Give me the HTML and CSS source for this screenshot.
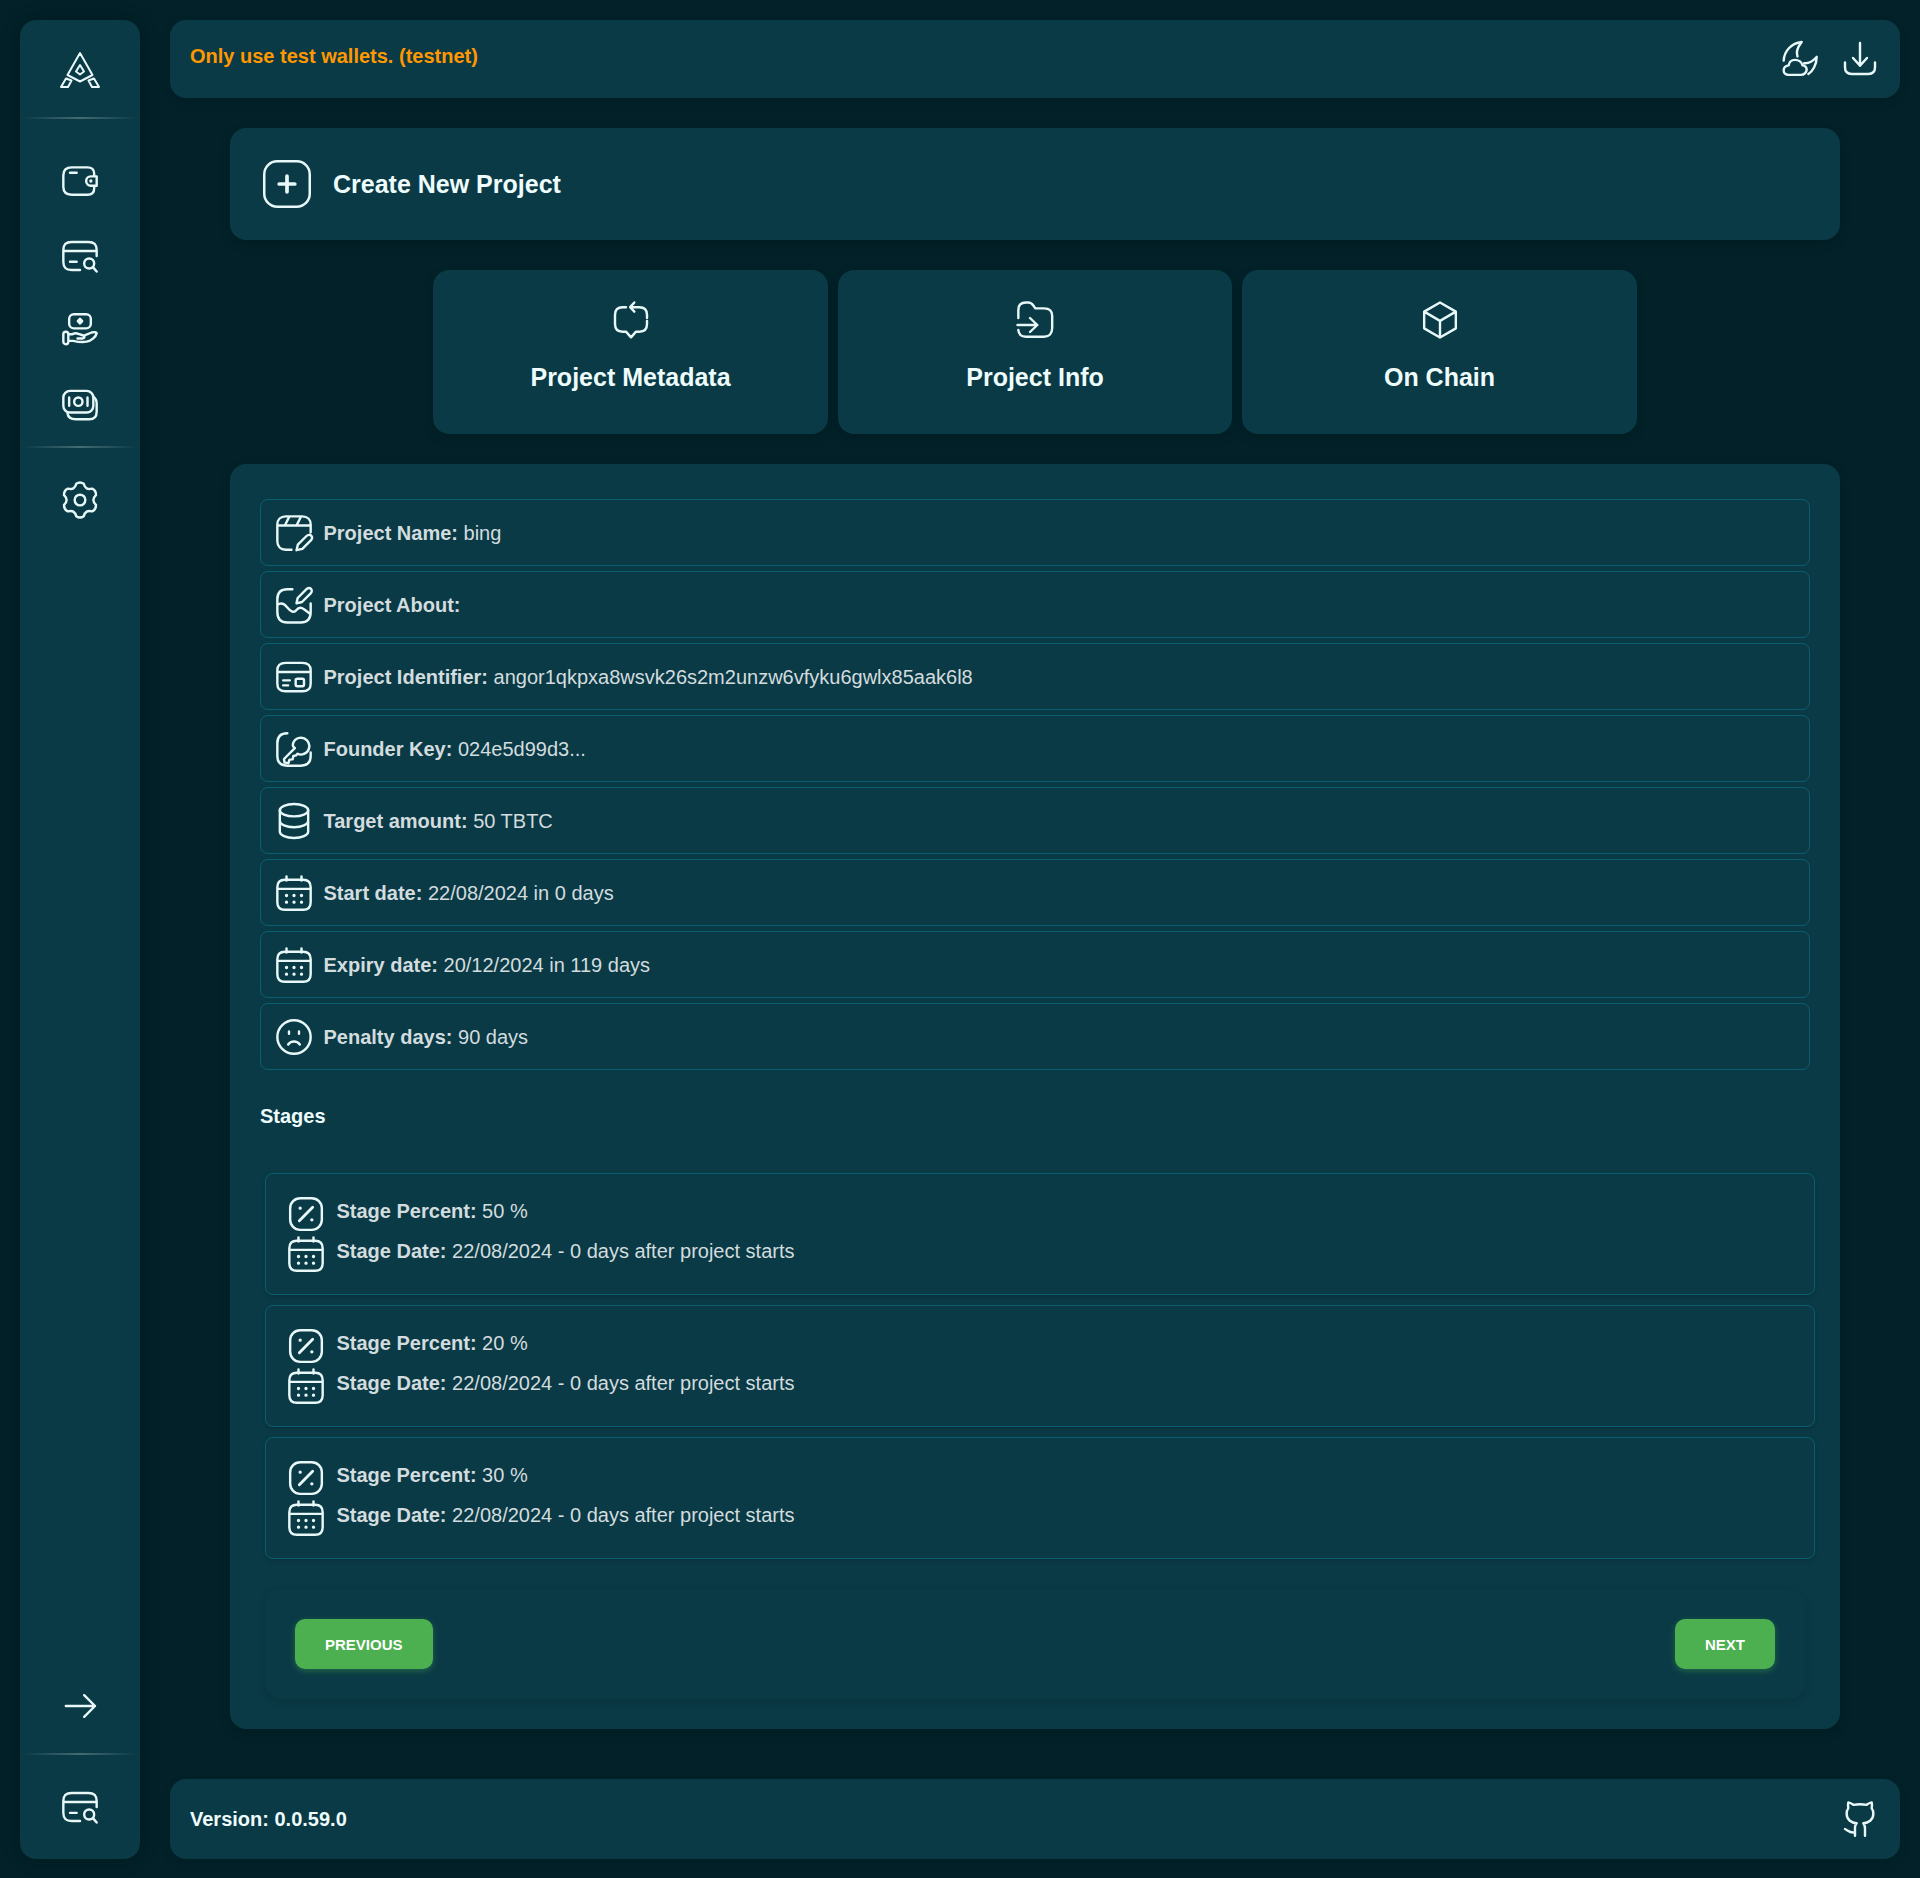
FILE: index.html
```html
<!DOCTYPE html>
<html lang="en">
<head>
<meta charset="utf-8">
<title>Create New Project</title>
<link rel="stylesheet" href="styles.css">
</head>
<body>
<svg class="defs" width="0" height="0" aria-hidden="true">
  <defs>
    <symbol id="i-calendar" viewBox="0 0 24 24"><path d="M7.500 2v2.500M16.500 2v2.500M6.500 4h11c3 0 4.500 1.500 4.500 4.500v9c0 3-1.500 4.500-4.500 4.500h-11c-3 0-4.500-1.500-4.500-4.500v-9C2 5.500 3.500 4 6.500 4ZM2 9.500h20"/><path class="dot" d="M7.500 13.500h.01M12 13.500h.01M16.500 13.500h.01M7.500 17.500h.01M12 17.500h.01M16.500 17.500h.01"/></symbol>
    <symbol id="i-percent" viewBox="0 0 24 24"><rect x="2.500" y="2.500" width="19" height="19" rx="6"/><path class="heavy" d="M8 16l8-8"/><path class="dot" d="M8.500 8.500h.01M15.500 15.500h.01"/></symbol>
    <symbol id="i-cardsearch" viewBox="0 0 24 24"><path d="M12 20.400H7c-3.500 0-5-1.400-5-4.900V8.500C2 5 3.500 3.600 7 3.600h10c3.500 0 5 1.400 5 4.900V12M2 9h20M6 15.500h4"/><circle cx="17.500" cy="16.500" r="3"/><path d="M20 19l2 2.300"/></symbol>
  </defs>
</svg>
<div class="app">
  <aside class="sidebar">
    <div class="logo">
      <svg class="logo-mark" viewBox="58 50 44 40"><path d="M80 53l12.500 22L80 81.500 67.500 75ZM80 65l4 6.500-4 3-4-3ZM66 78.500l5.500 2L68 87h-7ZM94 78.500l-5.500 2L92 87h7Z"/></svg>
    </div>
    <div class="rule"></div>
    <nav class="side-nav">
      <a class="side-item"><svg class="ic"  viewBox="0 0 24 24"><path d="M20.500 9V7.500c0-2.500-1.500-3.700-4-3.700H7C3.800 3.800 2 5.500 2 8.500v7c0 3 1.800 4.700 5 4.700h9.500c2.500 0 4-1.200 4-3.700V15M6 7h4M22 9.200h-3.500a2.800 2.800 0 0 0 0 5.600H22Z"/><path class="dot" d="M18.500 12h.01"/></svg></a>
      <a class="side-item"><svg class="ic"><use href="#i-cardsearch"/></svg></a>
      <a class="side-item"><svg class="ic" viewBox="0 0 24 24"><rect x="5.500" y="2.500" width="13" height="8.500" rx="2.800"/><path class="dot" d="M12 6.700h.01"/><path d="M12 5.300l1.300 1.400L12 8.100l-1.300-1.400ZM5.500 14.500h2c1-.5 2-.8 3.500-.2l3 1c1 .3 1 1.800-.5 1.800h-3M14 15.500l5-2c1.500-.5 3 0 3 .5-.5 2-3 4.500-6 5-3 .6-6 0-8-.5H5.500"/><rect x="2" y="13" width="3" height="7.500" rx="1.500"/></svg></a>
      <a class="side-item"><svg class="ic" viewBox="0 0 24 24"><rect x="2" y="3.500" width="18" height="13" rx="4"/><circle cx="11" cy="10" r="2.500"/><path d="M5.500 7.500v5M16.500 7.500v5M4.500 17c.3 2.300 2 3.500 5 3.500h8c3 0 4.500-1.500 4.500-4.500v-5c0-2-.8-3.200-2-4"/></svg></a>
    </nav>
    <div class="rule"></div>
    <nav class="side-nav side-nav-gap">
      <a class="side-item"><svg class="ic" viewBox="0 0 24 24"><path d="M9.750 2.260A4 4 0 0 1 14.250 2.260Q15.250 6.370 19.310 5.180A4 4 0 0 1 21.560 9.080Q18.500 12 21.560 14.920A4 4 0 0 1 19.310 18.820Q15.250 17.630 14.250 21.740A4 4 0 0 1 9.750 21.740Q8.750 17.630 4.690 18.820A4 4 0 0 1 2.440 14.920Q5.500 12 2.440 9.080A4 4 0 0 1 4.690 5.180Q8.750 6.370 9.750 2.260Z"/><circle cx="12" cy="12" r="3.200"/></svg></a>
    </nav>
    <div class="side-bottom">
      <a class="side-item"><svg class="ic" viewBox="0 0 24 24"><path d="M3.500 12h17.500M14.500 5.500L21 12l-6.500 6.500"/></svg></a>
      <div class="rule"></div>
      <a class="side-item"><svg class="ic"><use href="#i-cardsearch"/></svg></a>
    </div>
  </aside>

  <div class="column">
    <header class="bar">
      <strong class="warning">Only use test wallets. (testnet)</strong>
      <div class="bar-icons">
        <svg class="ic" viewBox="0 0 24 24"><path d="M13 1.800C7 2.500 2.500 7 2.200 13M13 1.800c-2.500 3.200-3.500 6.200-2.500 8.700M22 10.800c-2.500 2.700-5 4-7.500 3.700M22 10.800c0 4.700-2.500 8.700-5 10.200M5 21.500h7.500c2 0 3.500-1.500 3.500-3s-1-2.500-2.500-2.700C13 13.700 11 12.500 9 12.500s-3.500 1.200-3.800 3.300c-1.700.2-3 1.400-3 3s1.300 2.700 2.800 2.700Z"/></svg>
        <svg class="ic" viewBox="0 0 24 24"><path d="M12 2.400V16M7.800 11.400L12 16l4.200-4.600M3 14v3c0 2.800 1.500 4 4 4h10c2.500 0 4-1.200 4-4v-3"/></svg>
      </div>
    </header>

    <main class="content">
      <section class="card title-card">
        <svg class="ic ic-title" viewBox="0 0 24 24"><rect x="1.500" y="1.500" width="21" height="21" rx="6"/><path class="heavy" d="M12 8.400v7.200M8.400 12h7.200"/></svg>
        <h1 class="page-title">Create New Project</h1>
      </section>

      <section class="tabs">
        <a class="card tab">
          <svg class="ic" viewBox="0 0 24 24"><path d="M11.500 4.300H17c3 0 4.600 1.600 4.600 4.600v1.900M21.600 12.500v1.900c0 3-1.600 4.600-4.600 4.600h-2l-3 3.400-3-3.400H7c-3 0-4.600-1.600-4.600-4.600V8.900c0-3 1.600-4.600 4.600-4.600h2M14 1.500l-2.500 2.800L14 7"/></svg>
          <span class="tab-label">Project Metadata</span>
        </a>
        <a class="card tab">
          <svg class="ic" viewBox="0 0 24 24"><path d="M2 10.800V6c0-3 1.500-4.500 4.500-4.500H8c1.500 0 2.300.8 3 1.800l1.200 1.700h5.300c3 0 4.800 1.500 4.800 4.500V17c0 3-1.800 5-4.800 5h-11c-2.800 0-4.300-1.500-4.500-4M1.500 15h11.900M9 10.800l4.400 4.200L9 19.200"/></svg>
          <span class="tab-label">Project Info</span>
        </a>
        <a class="card tab">
          <svg class="ic" viewBox="0 0 24 24"><path d="M12 1.500l9.500 5.500v10L12 22.500 2.500 17V7ZM2.500 7L12 12.500 21.500 7M12 12.500v10"/></svg>
          <span class="tab-label">On Chain</span>
        </a>
      </section>

      <section class="card details">
        <div class="row"><svg class="ic" viewBox="0 0 24 24"><path d="M10.500 22H7c-3 0-5-2-5-5V7c0-3 2-5 5-5h10c3 0 5 2 5 5v4.500M2 7.500h20M9 2.500L6.500 7.500M16 2.500l-2.500 5M13.500 22.300l.8-3.300 5.200-5.200c.9-.9 2.100-.9 2.800-.2.7.7.6 1.900-.2 2.800L17 21.500Z"/></svg><p class="line"><b>Project Name:</b> bing</p></div>
        <div class="row"><svg class="ic" viewBox="0 0 24 24"><path d="M11 2.500H8C4 2.500 2 4.500 2 8.500V16c0 4 2 6.500 6 6.500h8c4 0 6-2.500 6-6.500v-5M2 12c2-1.500 4-1 6 1.500s4 3.500 5.500 1.500 3-1.500 4.500-.5l4 3M13.500 11l.7-3.200 5.300-5.300c.8-.8 2-.9 2.700-.2.700.7.6 1.900-.2 2.700l-5.200 5.200Z"/></svg><p class="line"><b>Project About:</b></p></div>
        <div class="row"><svg class="ic" viewBox="0 0 24 24"><path d="M7 3.500h10c3.500 0 5 1.400 5 4.500v8c0 3.100-1.500 4.500-5 4.500H7c-3.500 0-5-1.400-5-4.500V8c0-3.100 1.500-4.500 5-4.500ZM2 9h20M5.500 14h4M5.500 17h3"/><rect x="13" y="13" width="5" height="4.500" rx="1"/></svg><p class="line"><b>Project Identifier:</b> angor1qkpxa8wsvk26s2m2unzw6vfyku6gwlx85aak6l8</p></div>
        <div class="row"><svg class="ic" viewBox="0 0 24 24"><path d="M8 2.500C4 2.500 2 4.500 2 8.500v7.500c0 4 2 6 6 6h8c4 0 6-2 6-6v-2M12.500 11.500L6 18l.3 2.200 2.400.2.600-2 1.900-.2.400-2 1.600-.4 1-1c1 .6 2.400.7 3.500.2a5 5 0 1 0-6.200-6.500c-.3 1-.3 2 .5 2.500Z"/></svg><p class="line"><b>Founder Key:</b> 024e5d99d3...</p></div>
        <div class="row"><svg class="ic" viewBox="0 0 24 24"><ellipse cx="12" cy="5.500" rx="8.500" ry="3.700"/><path d="M3.500 5.500v13c0 2 3.800 3.700 8.500 3.700s8.500-1.700 8.500-3.700v-13M3.500 12c0 2 3.800 3.700 8.500 3.700s8.500-1.700 8.500-3.700"/></svg><p class="line"><b>Target amount:</b> 50 TBTC</p></div>
        <div class="row"><svg class="ic"><use href="#i-calendar"/></svg><p class="line"><b>Start date:</b> 22/08/2024 in 0 days</p></div>
        <div class="row"><svg class="ic"><use href="#i-calendar"/></svg><p class="line"><b>Expiry date:</b> 20/12/2024 in 119 days</p></div>
        <div class="row"><svg class="ic" viewBox="0 0 24 24"><circle cx="12" cy="12" r="10"/><path d="M8.500 16.500c.8-1.200 2-1.800 3.500-1.800s2.700.6 3.500 1.800M9 8.700v1.300M15 8.700v1.300"/></svg><p class="line"><b>Penalty days:</b> 90 days</p></div>

        <h2 class="stages-title">Stages</h2>

        <div class="stages">
          <div class="stage">
            <div class="stage-line"><svg class="ic"><use href="#i-percent"/></svg><p class="line"><b>Stage Percent:</b> 50 %</p></div>
            <div class="stage-line"><svg class="ic"><use href="#i-calendar"/></svg><p class="line"><b>Stage Date:</b> 22/08/2024 - 0 days after project starts</p></div>
          </div>
          <div class="stage">
            <div class="stage-line"><svg class="ic"><use href="#i-percent"/></svg><p class="line"><b>Stage Percent:</b> 20 %</p></div>
            <div class="stage-line"><svg class="ic"><use href="#i-calendar"/></svg><p class="line"><b>Stage Date:</b> 22/08/2024 - 0 days after project starts</p></div>
          </div>
          <div class="stage">
            <div class="stage-line"><svg class="ic"><use href="#i-percent"/></svg><p class="line"><b>Stage Percent:</b> 30 %</p></div>
            <div class="stage-line"><svg class="ic"><use href="#i-calendar"/></svg><p class="line"><b>Stage Date:</b> 22/08/2024 - 0 days after project starts</p></div>
          </div>
        </div>

        <div class="pager">
          <button class="btn" type="button">Previous</button>
          <button class="btn" type="button">Next</button>
        </div>
      </section>
    </main>

    <footer class="bar bar-footer">
      <strong class="version">Version: 0.0.59.0</strong>
      <svg class="ic" viewBox="0 0 24 24"><path d="M15 22v-4a4.800 4.800 0 0 0-1-3.500c3 0 6-2 6-5.500.08-1.250-.27-2.480-1-3.500.28-1.150.28-2.350 0-3.500 0 0-1 0-3 1.500-2.640-.5-5.360-.5-8 0C6 2 5 2 5 2c-.3 1.150-.3 2.350 0 3.500A5.400 5.400 0 0 0 4 9c0 3.500 3 5.500 6 5.500-.39.49-.68 1.050-.85 1.650-.17.6-.22 1.230-.15 1.850v4M9 20c-3 .8-4-1-6-2"/></svg>
    </footer>
  </div>
</div>
</body>
</html>
```
FILE: styles.css
```css
* { box-sizing: border-box; }

html, body { margin: 0; padding: 0; }

body {
  background: #022128;
  color: #d3dcde;
  font-family: "Liberation Sans", Arial, sans-serif;
  font-size: 20px;
  min-height: 1878px;
}

.defs { position: absolute; }

.ic {
  width: 40px;
  height: 40px;
  flex: none;
  fill: none;
  stroke: #e8f8f8;
  stroke-width: 1.45;
  stroke-linecap: round;
  stroke-linejoin: round;
}

.dot { stroke-width: 2; }
.heavy { stroke-width: 1.7; }

.app {
  display: flex;
  gap: 30px;
  padding: 20px 20px 19px;
  height: 1878px;
}

/* sidebar */
.sidebar {
  width: 120px;
  flex: none;
  display: flex;
  flex-direction: column;
  background: #0a3a46;
  border-radius: 16px;
  box-shadow: 0 0 20px rgba(0, 0, 0, .18);
}

.logo {
  height: 97px;
  display: flex;
  align-items: center;
  justify-content: center;
  padding-top: 2px;
  flex: none;
}

.logo-mark {
  width: 44px;
  height: 40px;
  fill: none;
  stroke: #e8f8f8;
  stroke-width: 2;
  stroke-linejoin: round;
}

.rule {
  height: 2px;
  flex: none;
  margin: 0 2px;
  background: linear-gradient(90deg, rgba(160, 190, 190, 0), rgba(160, 190, 190, .38) 50%, rgba(160, 190, 190, 0));
}

.side-nav {
  display: flex;
  flex-direction: column;
  padding: 25px 0 4px;
}

.side-nav-gap { padding-top: 15px; }

.side-item {
  height: 74.5px;
  display: flex;
  align-items: center;
  justify-content: center;
  flex: none;
}

.side-bottom {
  margin-top: auto;
  display: flex;
  flex-direction: column;
  padding-bottom: 15px;
}

.side-bottom .rule { margin-top: 9px; margin-bottom: 15px; }

/* column */
.column {
  flex: 1;
  min-width: 0;
  display: flex;
  flex-direction: column;
}

.bar {
  height: 78px;
  flex: none;
  display: flex;
  align-items: center;
  justify-content: space-between;
  padding: 0 20px;
  background: #0a3a46;
  border-radius: 16px;
  box-shadow: 0 4px 12px rgba(0, 0, 0, .08);
}

.bar-footer { height: 80px; margin-top: auto; }

.warning {
  color: #ff9800;
  margin-top: -6px;
}

.version { color: #eefcfc; }

.bar-icons { display: flex; gap: 20px; }

/* content */
.content {
  padding: 30px 60px 0;
  display: flex;
  flex-direction: column;
  gap: 30px;
}

.card {
  background: #0a3a46;
  border-radius: 16px;
  box-shadow: 0 4px 12px rgba(0, 0, 0, .12);
}

.title-card {
  height: 112px;
  display: flex;
  align-items: center;
  gap: 20.5px;
  padding: 0 30.5px;
}

.ic-title { width: 52px; height: 52px; stroke-width: 1.15; }

.page-title {
  margin: 0;
  font-size: 25px;
  font-weight: 700;
  color: #eefcfc;
}

.tabs {
  display: flex;
  justify-content: center;
  gap: 10px;
}

.tab {
  width: 394.5px;
  height: 164px;
  display: flex;
  flex-direction: column;
  align-items: center;
  padding-top: 30px;
}

.tab-label {
  margin-top: 23px;
  font-size: 25px;
  font-weight: 700;
  color: #eefcfc;
}

.details {
  height: 1265px;
  padding: 30px 30px 0;
}

.row {
  height: 67px;
  margin: 5px 0;
  display: flex;
  align-items: center;
  gap: 9.5px;
  padding: 0 13px;
  border: 1px solid #0b5d70;
  border-radius: 8px;
}

.line { margin: 0; }
.row .line { padding-top: 1px; }
.line b { font-weight: 700; }

.stages-title {
  margin: 35px 0 0;
  font-size: 20px;
  line-height: 23px;
  font-weight: 700;
  color: #eefcfc;
}

.stages {
  margin: 45px -5px 0 5px;
  display: flex;
  flex-direction: column;
  gap: 10px;
}

.stage {
  height: 122px;
  padding: 20px 19px 20px 20px;
  border: 1px solid #0b5d70;
  border-radius: 8px;
  box-shadow: 0 2px 4px rgba(0, 0, 0, .15);
}

.stage-line {
  height: 40px;
  display: flex;
  align-items: center;
  gap: 10.5px;
}

.stage-line .line { margin-top: -6px; }

.pager {
  margin: 30px 5px 0;
  height: 110px;
  padding: 0 30px;
  display: flex;
  align-items: center;
  justify-content: space-between;
  border-radius: 16px;
  box-shadow: 0 3px 8px rgba(0, 0, 0, .14);
}

.btn {
  height: 50px;
  padding: 0 30px;
  border: 0;
  border-radius: 10px;
  background: #4caf50;
  color: #fff;
  font-family: inherit;
  font-size: 15px;
  font-weight: 700;
  text-transform: uppercase;
  box-shadow: 0 2px 6px rgba(76, 175, 80, .4);
}
```
